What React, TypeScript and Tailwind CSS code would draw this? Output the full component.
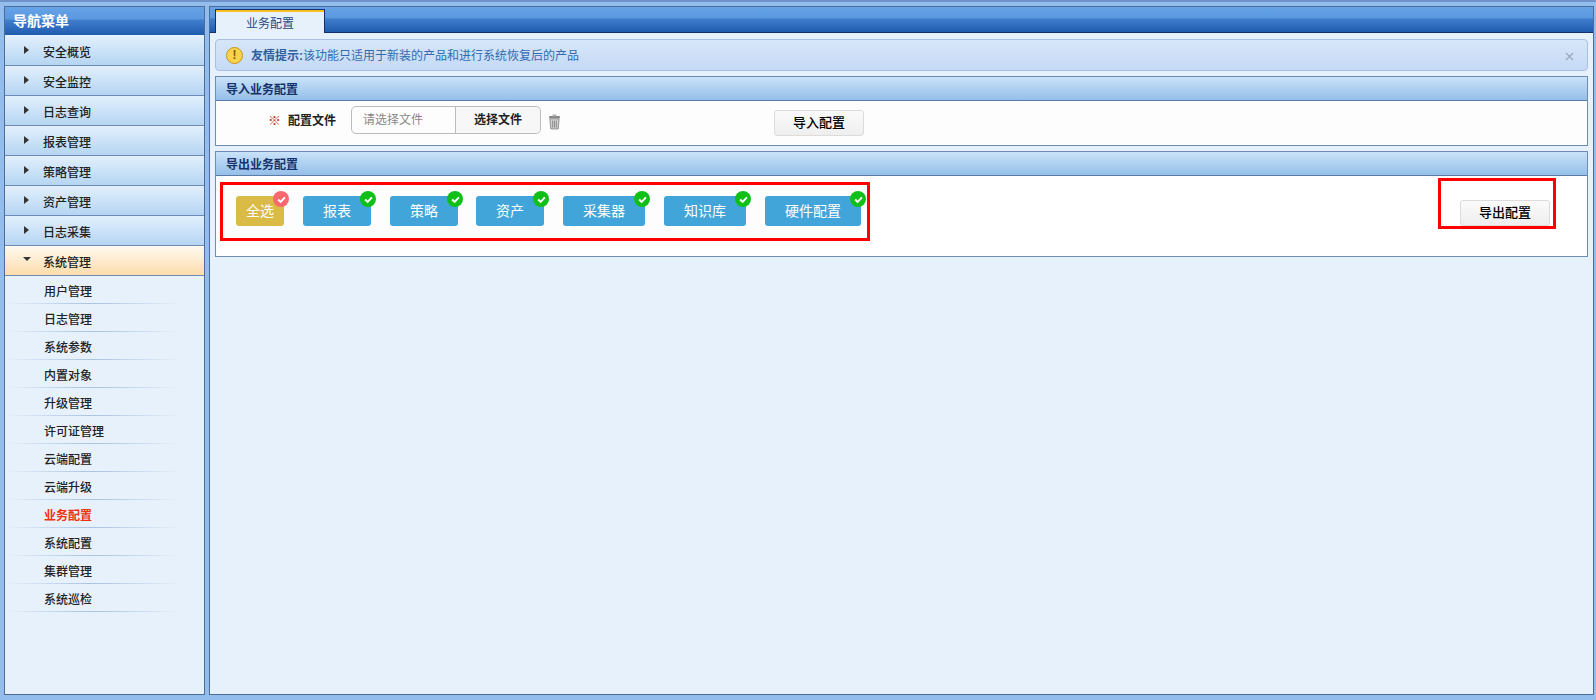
import { X } from 'lucide-react'

const font = '[font-family:"Liberation_Sans","Noto_Sans_CJK_SC",sans-serif]'

const topMenus = ['安全概览', '安全监控', '日志查询', '报表管理', '策略管理', '资产管理', '日志采集']
const subMenus = ['用户管理', '日志管理', '系统参数', '内置对象', '升级管理', '许可证管理', '云端配置', '云端升级', '业务配置', '系统配置', '集群管理', '系统巡检']
const options = [
  { label: '报表', width: 'w-[68px]' },
  { label: '策略', width: 'w-[68px]' },
  { label: '资产', width: 'w-[68px] -ml-px' },
  { label: '采集器', width: 'w-[82px]' },
  { label: '知识库', width: 'w-[82px]' },
  { label: '硬件配置', width: 'w-[96px]' },
]

function Badge({ color }: { color: string }) {
  return (
    <span className={`absolute -top-[5px] -right-[5px] flex h-4 w-4 items-center justify-center rounded-full ${color}`}>
      <svg viewBox="0 0 10 10" className="h-[9px] w-[9px]">
        <path d="M1.2 5 L4 7.6 L8.8 2.6" fill="none" stroke="#fff" strokeWidth="2.2" />
      </svg>
    </span>
  )
}

function PanelHeader({ title }: { title: string }) {
  return (
    <div className="flex h-6 items-center border-b border-[#5b7ba8] bg-gradient-to-b from-[#c9e2f8] to-[#95bfe9] pl-[10px] pt-[2px] text-[12px] font-semibold text-[#15316b]">
      {title}
    </div>
  )
}

function ActionButton({ label }: { label: string }) {
  return (
    <button className="h-[26px] w-[90px] rounded-[3px] border border-[#dcdcdc] bg-gradient-to-b from-[#fafafa] to-[#eeeeee] text-[13px] font-medium text-black">
      {label}
    </button>
  )
}

export default function App() {
  return (
    <div className={`${font} flex h-[700px] w-[1596px] gap-[4px] overflow-hidden border-t-2 border-[#6f93c9] bg-[#93bdec] pl-[4px] pr-[2px] pt-[4px] pb-[5px]`}>
      <aside className="flex w-[201px] flex-col border border-[#4f6b96] bg-[#e7f1fc]">
        <div className="flex h-[28px] items-center bg-[linear-gradient(#66a3e6,#5a98e0_42%,#3f7dcd_48%,#1f5cae)] pl-[8px] text-[14px] font-bold text-white">
          导航菜单
        </div>
        <div className="h-[1px] bg-[#e4f0fb]" />
        {topMenus.map((m) => (
          <div key={m} className="flex h-[30px] items-center border-b border-[#6d8bb5] bg-gradient-to-b from-[#e2f0fd] to-[#b5d5f2] text-[12px] font-medium text-[#222]">
            <span className="ml-[19px] -mt-[1px] h-0 w-0 border-y-[4px] border-l-[5px] border-y-transparent border-l-[#333]" />
            <span className="ml-[14px] pt-[5px]">{m}</span>
          </div>
        ))}
        <div className="flex h-[30px] items-center border-b border-[#6d8bb5] bg-gradient-to-b from-[#fffaf0] to-[#fddcab] text-[12px] font-medium text-[#222]">
          <span className="ml-[18px] -mt-[3px] h-0 w-0 border-x-[4px] border-t-[4px] border-x-transparent border-t-[#333]" />
          <span className="ml-[12px] pt-[5px]">系统管理</span>
        </div>
        {subMenus.map((m) => (
          <div key={m} className="relative flex h-[28px] shrink-0 items-center pl-[39px] pt-[3px] text-[12px] font-medium text-[#222]">
            <span className={m === '业务配置' ? 'font-semibold text-[#f03010]' : ''}>{m}</span>
            <span className="absolute bottom-0 left-0 h-px w-[175px] bg-gradient-to-r from-transparent via-[#a9c3e2] to-transparent" />
          </div>
        ))}
      </aside>

      <main className="flex flex-1 flex-col border border-[#4f6b96] bg-[#e7f1fc]">
        <div className="flex h-[26px] items-end border-b border-[#12306a] bg-[linear-gradient(#66a3e6,#5a98e0_42%,#3f7dcd_48%,#1f5cae)] pl-[5px]">
          <div className="-mb-px flex h-[24px] w-[110px] flex-col border-x border-t border-[#12306a] bg-[#e7f1fc] text-[12px] text-[#2a4a80]">
            <span className="h-[2px] bg-[#fbbf24]" />
            <span className="flex flex-1 items-center justify-center pt-[3px]">业务配置</span>
          </div>
        </div>

        <div className="mx-[5px] mt-[6px] flex h-[32px] shrink-0 items-center rounded-[4px] border border-[#a9c0e0] bg-gradient-to-b from-[#d6e6fa] to-[#c6daf5] pl-[10px] pr-[11px] text-[12px]">
          <span className="flex h-[17px] w-[17px] items-center justify-center rounded-full border border-[#c8951a] bg-[#fbd24e] text-[12px] font-bold leading-none text-[#8a5a00]">!</span>
          <span className="ml-[8px] pt-[2px] font-semibold text-[#2f5f9f]">友情提示:</span>
          <span className="pt-[2px] text-[#2f6cb0]">该功能只适用于新装的产品和进行系统恢复后的产品</span>
          <X className="ml-auto mt-[3px] h-[13px] w-[13px] text-[#9aa5b5]" strokeWidth={2} />
        </div>

        <section className="mx-[5px] mt-[5px] border border-[#6d8bb5] bg-[#fdfdfd]">
          <PanelHeader title="导入业务配置" />
          <div className="flex h-[44px] items-start">
            <span className="ml-[52px] mt-[12px] w-[12px] text-[13px] leading-[16px] text-[#c0392b]">※</span>
            <span className="ml-[8px] mt-[12px] text-[12px] font-semibold leading-[16px] text-[#222]">配置文件</span>
            <div className="ml-[15px] mt-[5px] flex h-[28px] w-[190px] items-center rounded-[5px] border border-[#bbbbbb] text-[12px]">
              <span className="w-[103px] pl-[11px] text-[#888]">请选择文件</span>
              <span className="flex h-full flex-1 items-center justify-center rounded-r-[5px] border-l border-[#bbbbbb] bg-[#f7f7f7] font-semibold text-[#222]">选择文件</span>
            </div>
            <svg viewBox="0 0 14 16" className="ml-[7px] mt-[13px] h-4 w-[13px]">
              <rect x="1" y="1.5" width="12" height="2.5" rx="1" fill="#8a8a8a" />
              <rect x="5" y="0" width="4" height="2" fill="#aaa" />
              <path d="M2 4.5 H12 L11 15.5 H3 Z" fill="#d0d0d0" stroke="#777" strokeWidth="0.8" />
              <path d="M5 6.5 V14 M7 6.5 V14 M9 6.5 V14" stroke="#777" strokeWidth="0.8" />
            </svg>
            <div className="ml-[213px] mt-[9px]">
              <ActionButton label="导入配置" />
            </div>
          </div>
        </section>

        <section className="mx-[5px] mt-[5px] border border-[#6d8bb5] bg-white">
          <PanelHeader title="导出业务配置" />
          <div className="flex h-[80px] items-start">
            <div className="ml-[4px] mt-[6px] flex h-[59px] w-[650px] items-start gap-[19px] border-[3px] border-[#ff0000] bg-[#fdfdfd] pl-[13px] pt-[11px]">
              <div className="relative flex h-[30px] w-[48px] items-center justify-center rounded-[3px] bg-[#d9bb45] text-[14px] text-white">
                全选
                <Badge color="bg-[#f8696f]" />
              </div>
              {options.map((o) => (
                <div key={o.label} className={`relative flex h-[30px] ${o.width} items-center justify-center rounded-[3px] bg-[#42a5da] text-[14px] text-white`}>
                  {o.label}
                  <Badge color="bg-[#10bf18]" />
                </div>
              ))}
            </div>
            <div className="ml-[568px] mt-[2px] flex h-[51px] w-[118px] items-end justify-end border-[3px] border-[#ff0000] pr-[3px]">
              <ActionButton label="导出配置" />
            </div>
          </div>
        </section>
      </main>
    </div>
  )
}
